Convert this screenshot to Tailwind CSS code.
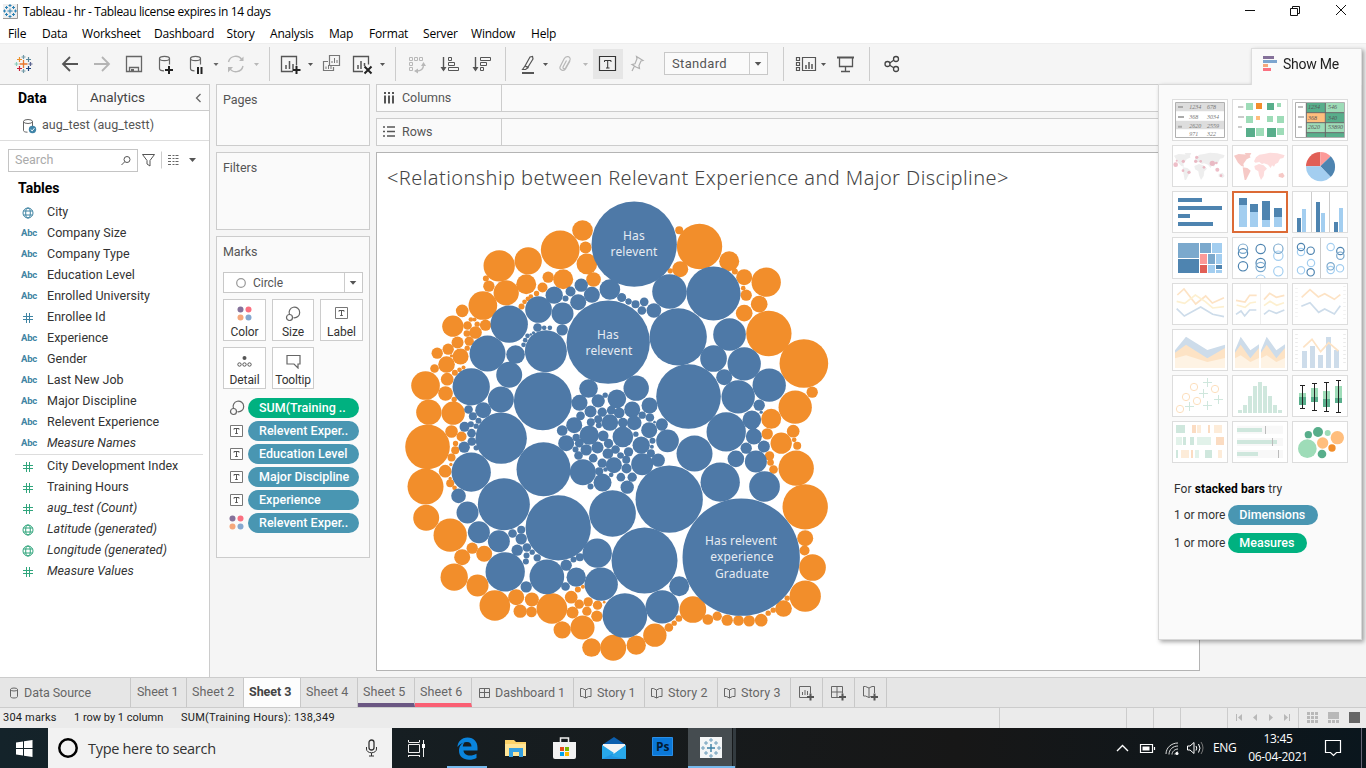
<!DOCTYPE html>
<html lang="en">
<head>
<meta charset="utf-8">
<title>Tableau - hr</title>
<script src="https://cdn.jsdelivr.net/npm/@tailwindcss/browser@4"></script>
</head>
<body class="w-[1366px] h-[768px] overflow-hidden bg-white font-['Roboto','Open_Sans',sans-serif] text-[#333]">
<!-- shared icon symbols -->
<svg class="hidden">
  <symbol id="tee" viewBox="0 0 13 12"><path d="M.5.5h12v11H.5z" fill="#fff" stroke="#777"/><path d="M4 4.700V3.500h5v1.200M6.500 3.500v5M5.200 8.500h2.600" fill="none" stroke="#555"/></symbol>
  <symbol id="globe" viewBox="0 0 12 12"><g fill="none" stroke="currentColor"><circle cx="6" cy="6" r="5"/><ellipse cx="6" cy="6" rx="2.300" ry="5"/><path d="M1.500 4h9M1.500 8h9"/></g></symbol>
  <symbol id="hash" viewBox="0 0 12 12"><path d="M1 4.500h10M1 7.500h10M4.500 1v10M7.500 1v10" fill="none" stroke="currentColor"/></symbol>
  <symbol id="sizes" viewBox="0 0 16 16"><g fill="none" stroke="#666" stroke-width="1.200"><path d="M4.500 8.500A5.300 5.300 0 1 1 8.500 11.700"/><circle cx="4.500" cy="11.500" r="3"/></g></symbol>
  <symbol id="dots" viewBox="0 0 15 15"><circle cx="3.500" cy="3.500" r="3" fill="#85719a"/><circle cx="11.500" cy="3.500" r="3" fill="#fa7080"/><circle cx="3.500" cy="11.500" r="3" fill="#f5a77c"/><circle cx="11.500" cy="11.500" r="3" fill="#85a8d0"/></symbol>
  <symbol id="book" viewBox="0 0 12 12"><path d="M.5 1.500h2l3 1.500v8l-3-1.500h-2zM5.500 3l3-1.500h2.500v8H8.500l-3 1.500" fill="none" stroke="#666"/></symbol>
</svg>

<div class="flex flex-col w-full h-full">
  <!-- window title -->
  <header class="flex items-center h-[23px] shrink-0 pl-[3px] font-['Open_Sans'] text-[12px] text-black">
    <svg width="15" height="15" viewBox="0 0 15 15"><path d="M0 0h14.500v14.500H0z" fill="#eee"/><path d="M14.500 0v14.500H0" fill="none" stroke="#999"/><path d="M7 4.500v5M4.500 7h5M7 0v3M5.500 1.500h3M7 11v3M5.500 12.500h3M0 7h3M1.500 5.500v3M11 7h3M12.500 5.500v3M3.500 2v3M2 3.500h3M10.500 2v3M9 3.500h3M3.500 9v3M2 10.500h3M10.500 9v3M9 10.500h3" stroke="#2c82b5" fill="none"/></svg>
    <span class="ml-[5px] tracking-[-0.37px] whitespace-nowrap">Tableau - hr - Tableau license expires in 14 days</span>
    <svg class="ml-auto" width="126" height="23" viewBox="1240 0 126 23" fill="none" stroke="#111"><path d="M1245 10.500h10M1290.500 8.500h7v7h-7zM1292.500 8.500v-2h7v7h-2M1336 5l10 10M1346 5l-10 10"/></svg>
  </header>
  <nav class="flex items-center h-[20px] shrink-0 pl-2 pt-px font-['Open_Sans'] text-[12px] tracking-[-0.2px] text-black whitespace-nowrap">
    <span class="w-[34px]">File</span><span class="w-[40px]">Data</span><span class="w-[72px]">Worksheet</span><span class="w-[72.500px]">Dashboard</span><span class="w-[43.500px]">Story</span><span class="w-[59px]">Analysis</span><span class="w-[40px]">Map</span><span class="w-[54px]">Format</span><span class="w-[48px]">Server</span><span class="w-[60px]">Window</span><span>Help</span>
  </nav>

  <!-- toolbar: each icon cell uses window coordinates -->
  <div class="flex h-[41px] shrink-0 bg-[#f5f5f5] border-t border-[#eee]">
    <svg width="48" height="40" viewBox="0 44 48 40" fill="none"><path d="M47.500 47v34" stroke="#ccc"/><g stroke-width="1.200"><path d="M23.500 60v8M19.500 64h8" stroke="#e8762c" stroke-width="1.300"/><path d="M19.500 57v5M17 59.500h5" stroke="#eb912c"/><path d="M28.500 57v5M26 59.500h5" stroke="#59879b"/><path d="M19.500 66v5M17 68.500h5" stroke="#c72037"/><path d="M28.500 66v5M26 68.500h5" stroke="#1f447e"/><path d="M23.500 55v4M21.500 57h4" stroke="#7199a6"/><path d="M23.500 69v4M21.500 71h4" stroke="#7099a6"/><path d="M16.500 62v4M14.500 64h4" stroke="#8cb"/><path d="M30.500 62v4M28.500 64h4" stroke="#5b6591"/></g></svg>
    <svg width="38" height="40" viewBox="48 44 38 40" fill="none" stroke="#555" stroke-width="1.800"><path d="M78 64H63M70 57l-7 7 7 7"/></svg>
    <svg width="32" height="40" viewBox="86 44 32 40" fill="none" stroke="#b4b4b4" stroke-width="1.800"><path d="M94 64h15M102 57l7 7-7 7"/></svg>
    <svg width="32" height="40" viewBox="118 44 32 40" fill="none" stroke="#666"><path d="M126.500 56.500h15v15h-15zM129.500 71.500v-4h9v4" stroke-width="1.300"/><path d="M131 69h3v3h-3z" fill="#666" stroke="none"/></svg>
    <svg width="32" height="40" viewBox="150 44 32 40" fill="none" stroke="#666"><g stroke-width="1.200"><ellipse cx="164.500" cy="58.500" rx="5" ry="2.200"/><path d="M159.500 58.500v10c0 1.500 2 2.300 4.500 2.300M169.500 58.500v6"/></g><path d="M169 66v8M165 70h8" stroke="#222" stroke-width="2"/></svg>
    <svg width="40" height="40" viewBox="182 44 40 40" fill="none" stroke="#666"><g stroke-width="1.200"><ellipse cx="195.500" cy="58.500" rx="5" ry="2.200"/><path d="M190.500 58.500v10c0 1.500 2 2.300 4 2.300M200.500 58.500v6"/></g><path d="M198 67v7M201.500 67v7" stroke="#222" stroke-width="2"/><path d="M213.500 63h5l-2.500 3z" fill="#666" stroke="none"/></svg>
    <svg width="48" height="40" viewBox="222 44 48 40" fill="none" stroke="#b8b8b8"><path d="M228.500 62a7.300 7.300 0 0 1 13.500-2M243 66a7.300 7.300 0 0 1-13.500 2" stroke-width="1.400"/><path d="M239 61h4.500v-4.500zM228 72.500V67h5zM254 63h5l-2.500 3z" fill="#b8b8b8" stroke="none"/><path d="M269.500 47v34" stroke="#ccc"/></svg>
    <svg width="46" height="40" viewBox="270 44 46 40" fill="none" stroke="#555"><path d="M293 71.500h-11.500v-15h15v9" stroke-width="1.300"/><path d="M286 69v-4M289.500 69v-8M293 69v-5" stroke-width="1.500"/><path d="M296.500 66v8M292.500 70h8" stroke="#222" stroke-width="2"/><path d="M308 63h5l-2.500 3z" fill="#555" stroke="none"/></svg>
    <svg width="31" height="40" viewBox="316 44 31 40" fill="none" stroke="#777"><path d="M329.500 55.500h10v10h-10zM328 61.500h-4.500v9h10V67" stroke-width="1.200"/><path d="M332 63v-2M334.500 63v-5M337 63v-3M326 69v-2.500M328.500 69v-4M331 69v-3"/></svg>
    <svg width="49" height="40" viewBox="347 44 49 40" fill="none" stroke="#555"><path d="M363 71.500h-9.500v-15h15v8" stroke-width="1.300"/><path d="M358 69v-4M361 69v-8M364.500 66v-3" stroke-width="1.500"/><path d="M364.500 66.500l7 7M371.500 66.500l-7 7" stroke="#222" stroke-width="2"/><path d="M380 63h5l-2.500 3z" fill="#555" stroke="none"/><path d="M395.500 47v34" stroke="#ccc"/></svg>
    <svg width="37" height="40" viewBox="396 44 37 40" fill="none" stroke="#b8b8b8"><path d="M409.500 57.500h3v3h-3zM414.500 57.500h3v3h-3zM419.500 57.500h3v3h-3zM409.500 62.500h3v3h-3zM409.500 67.500h3v3h-3z"/><path d="M423.500 65c0 4-3 6-7 6" stroke-width="1.300"/><path d="M421 66l2.500-4 2.500 4zM418 68.500v5l-4-2.500z" fill="#b8b8b8" stroke="none"/></svg>
    <svg width="33" height="40" viewBox="433 44 33 40" fill="none" stroke="#555"><path d="M443.500 57v13" stroke-width="1.400"/><path d="M440.500 67h6l-3 4.500z" fill="#555" stroke="none"/><path d="M448.500 57.500h3v3h-3zM448.500 62.500h6v3h-6zM448.500 67.500h10v3h-10z"/></svg>
    <svg width="40" height="40" viewBox="466 44 40 40" fill="none" stroke="#555"><path d="M475.500 57v13" stroke-width="1.400"/><path d="M472.500 67h6l-3 4.500z" fill="#555" stroke="none"/><path d="M480.500 57.500h10v3h-10zM480.500 62.500h6v3h-6zM480.500 67.500h3v3h-3z"/><path d="M505.500 47v34" stroke="#ccc"/></svg>
    <svg width="46" height="40" viewBox="506 44 46 40" fill="none" stroke="#555"><path d="M525 66l5-9 2.500-.5.500 2.500-5 8zM522.500 69.500l2.500-3.500 3 1.700-2.500 1.800z" stroke-width="1.200"/><path d="M522 73h12" stroke-width="2"/><path d="M543 63h5l-2.500 3z" fill="#555" stroke="none"/></svg>
    <svg width="41" height="40" viewBox="552 44 41 40" fill="none" stroke="#b8b8b8"><path d="M570 61l-4.500 8c-1.500 2.500-6.500 1-5.500-2l4-8c2-4 7-2.500 6 1l-4.500 8c-1 1.500-3 .5-2.500-1l3.500-6.500" stroke-width="1.200"/><path d="M583 63h5l-2.500 3z" fill="#b8b8b8" stroke="none"/></svg>
    <svg width="31" height="40" viewBox="593 44 31 40" fill="none" stroke="#333"><path d="M593 49h30v30h-30z" fill="#e6e6e6" stroke="none"/><path d="M599.500 56.500h16v14h-16z" fill="#efefef" stroke-width="1.200"/><path d="M604.500 62v-1.500h6.500V62M607.700 60.500v7.500M606 68h3.500"/></svg>
    <svg width="40" height="40" viewBox="624 44 40 40" fill="none" stroke="#b0b0b0"><path d="M636.500 56.500l6.500 4-2 .5-2 4.500.5 3-3.500-1.500-4-2.500 3-.7 2-5zM634.500 66l-2.500 5" stroke-width="1.200"/></svg>
    <div class="flex w-[104px] h-[23px] mt-2 bg-[#fafafa] border border-[#c8c8c8] items-center pl-[7px] text-[13px] tracking-[0.35px] text-[#555]">Standard
      <svg class="ml-auto border-l border-[#ccc]" width="18" height="21" viewBox="0 0 18 21"><path d="M5 9h7l-3.500 4z" fill="#555"/></svg>
    </div>
    <svg width="61" height="40" viewBox="768 44 61 40" fill="none" stroke="#555"><path d="M783.500 47v34" stroke="#ccc"/><path d="M796.500 57.500h3v3h-3zM796.500 62.500h3v3h-3zM796.500 67.500h3v3h-3zM802.500 57.500h13v13h-13z" stroke-width="1.200"/><path d="M806 69v-4M809 69v-7M812 69v-5" stroke-width="1.500"/><path d="M821 63h5l-2.500 3z" fill="#555" stroke="none"/></svg>
    <svg width="41" height="40" viewBox="829 44 41 40" fill="none" stroke="#555"><path d="M837 57.500h17" stroke-width="2"/><path d="M839.500 58v8.500h13V58M845.500 67v4M841 71.500h9" stroke-width="1.300"/><path d="M869.500 47v34" stroke="#ccc"/></svg>
    <svg width="40" height="40" viewBox="870 44 40 40" fill="none" stroke="#444" stroke-width="1.300"><circle cx="887.500" cy="64" r="2.500"/><circle cx="896" cy="59" r="2.500"/><circle cx="896" cy="69" r="2.500"/><path d="M889.700 63l4-2.700M889.700 65.300l4 2.400"/></svg>
  </div>

  <!-- workspace -->
  <main class="relative flex h-[593px] shrink-0 bg-[#f5f5f5] whitespace-nowrap">
    <aside class="w-[210px] h-full bg-white border-r border-[#ccc] shrink-0 flex flex-col">
      <div class="flex h-[27px] shrink-0">
        <div class="w-[77px] border-t border-[#ccc] pl-[18px] leading-[26px] text-[14px] font-bold text-black">Data</div>
        <div class="flex items-center flex-1 border-t border-l border-b border-[#ccc] bg-[#fafafa] pl-[12px] text-[13.500px] text-[#444]">Analytics
          <svg class="ml-auto mr-[6px]" width="9" height="12" viewBox="0 0 9 12"><path d="M6.500 2l-4 4 4 4" fill="none" stroke="#666" stroke-width="1.300"/></svg></div>
      </div>
      <div class="flex items-center h-[30px] shrink-0 border-b border-[#ddd] pl-[22px] text-[12.500px] text-[#555] tracking-[0.05px]">
        <svg width="15" height="16" viewBox="0 0 15 16"><g fill="none" stroke="#666"><ellipse cx="6" cy="3.500" rx="4.500" ry="2"/><path d="M1.500 3.500v9c0 1 1.500 1.700 4 1.700M10.500 3.500v5"/></g><circle cx="10.500" cy="11.500" r="3.700" fill="#3f84a8"/><path d="M8.700 11.500l1.500 1.400 2.200-2.700" fill="none" stroke="#fff"/></svg>
        <span class="ml-[5px]">aug_test (aug_testt)</span>
      </div>
      <div class="flex items-center h-[23px] shrink-0 mt-2 ml-2">
        <div class="flex items-center w-[130px] h-[23px] border border-[#c4c4c4] pl-[6px] pr-[5px] text-[12.500px] text-[#aaa]">Search
          <svg class="ml-auto" width="12" height="12" viewBox="0 0 12 12" fill="none" stroke="#555"><circle cx="7" cy="4.500" r="3"/><path d="M4.700 6.800L1.500 10"/></svg></div>
        <svg width="66" height="23" viewBox="138 149 66 23"><path d="M142.500 154.500h12l-4.500 6v5.500l-3-2v-3.500z" fill="none" stroke="#555"/><path d="M161.500 151.500v17" stroke="#ccc"/><path d="M168 155.500h12M168 158.500h12M168 161.500h12M168 164.500h12" stroke="#666" stroke-dasharray="3 1.500 2 1"/><path d="M189 158h7l-3.500 4z" fill="#555"/></svg>
      </div>
      <h2 class="mt-[7px] pl-[18px] h-[20px] leading-[19px] text-[14px] font-bold text-black shrink-0">Tables</h2>
      <ul id="dims" class="pl-[21px] text-[12.500px] tracking-[0.03px] mt-[3px]"></ul>
      <div class="ml-[15px] mr-[6px] mb-px h-px bg-[#ddd] shrink-0"></div>
      <ul id="meas" class="pl-[21px] text-[12.500px] tracking-[0.03px]"></ul>
    </aside>

    <section class="flex flex-col gap-[6px] ml-[6px] w-[154px] shrink-0 text-[12.500px] text-[#555] tracking-[-0.05px]">
      <div class="h-[62px] border border-[#ccc] bg-[#fafafa] pl-[6px] pt-[6px]">Pages</div>
      <div class="h-[78px] border border-[#ccc] bg-[#fafafa] pl-[6px] pt-[6px]">Filters</div>
      <div class="h-[322px] border border-[#ccc] bg-[#fafafa] pl-[6px] pt-[6px]">
        <div class="h-[29px]">Marks</div>
        <div class="flex items-center w-[140px] h-[21px] border border-[#c8c8c8] bg-white pl-[11px]">
          <svg width="12" height="12" viewBox="0 0 12 12"><circle cx="6" cy="6" r="4.300" fill="none" stroke="#999" stroke-width="1.200"/></svg>
          <span class="ml-[6px] pt-px text-[12px]">Circle</span>
          <svg class="ml-auto border-l border-[#ccc]" width="18" height="19" viewBox="0 0 18 19"><path d="M5 8h7l-3.500 4z" fill="#555"/></svg>
        </div>
        <div class="grid grid-cols-[43px_42px_43px] gap-x-[6px] gap-y-[6px] mt-[6px] text-[12px] tracking-[-0.05px] text-[#333]">
          <div class="h-[42px] border border-[#ccc] bg-white flex flex-col items-center pt-[6px]"><svg width="15" height="15"><use href="#dots"/></svg><span class="leading-[13px] mt-[5px]">Color</span></div>
          <div class="h-[42px] border border-[#ccc] bg-white flex flex-col items-center pt-[6px]"><svg width="16" height="15" viewBox="0 0 16 15"><use href="#sizes" width="16" height="16"/></svg><span class="leading-[13px] mt-[5px]">Size</span></div>
          <div class="h-[42px] border border-[#ccc] bg-white flex flex-col items-center pt-[7px]"><svg width="13" height="12"><use href="#tee"/></svg><span class="leading-[13px] mt-[7px]">Label</span></div>
          <div class="h-[42px] border border-[#ccc] bg-white flex flex-col items-center pt-[6px]"><svg width="15" height="15" viewBox="0 0 15 15"><circle cx="7.500" cy="4" r="2" fill="#555"/><g fill="none" stroke="#555"><circle cx="2.500" cy="10.500" r="1.700"/><circle cx="7.500" cy="10.500" r="1.700"/><circle cx="12.500" cy="10.500" r="1.700"/></g></svg><span class="leading-[13px] mt-[5px]">Detail</span></div>
          <div class="h-[42px] border border-[#ccc] bg-white flex flex-col items-center pt-[6px]"><svg width="15" height="15" viewBox="0 0 15 15"><path d="M1 1.500h13v8.500h-2v4l-4-4H1z" fill="none" stroke="#666" stroke-width="1.200"/></svg><span class="leading-[13px] mt-[5px] tracking-[-0.2px]">Tooltip</span></div>
        </div>
        <ul id="pills" class="mt-[9px] pl-[6px] flex flex-col gap-[4px] text-[12.500px] font-medium text-white tracking-[0.02px]"></ul>
      </div>
    </section>

    <section class="flex flex-col ml-[6px] w-[824px] shrink-0 text-[12.500px] text-[#555] tracking-[-0.05px]">
      <div class="flex h-[28px] border border-[#ccc] bg-[#fafafa]">
        <div class="flex items-center w-[125px] border-r border-[#ccc] pl-[6px]"><svg width="14" height="14" viewBox="0 0 14 14"><path d="M2 1v2M2 4.500v8M6 1v2M6 4.500v8M10 1v2M10 4.500v8" stroke="#555" stroke-width="2"/></svg><span class="ml-[5px]">Columns</span></div>
      </div>
      <div class="flex h-[28px] mt-[6px] border border-[#ccc] bg-[#fafafa]">
        <div class="flex items-center w-[125px] border-r border-[#ccc] pl-[6px]"><svg width="14" height="14" viewBox="0 0 14 14"><path d="M0 2h2M4 2h8M0 6.500h2M4 6.500h8M0 11h2M4 11h8" stroke="#555" stroke-width="1.700"/></svg><span class="ml-[5px]">Rows</span></div>
      </div>
      <div class="mt-[6px] h-[519px] bg-white border border-[#b4b4b4]">
        <h1 class="h-[50px] pl-[10px] leading-[49px] font-['Noto_Sans','Open_Sans'] font-light text-[20px] tracking-[0.42px] text-[#444]">&lt;Relationship between Relevant Experience and Major Discipline&gt;</h1>
        <svg id="bubbles" width="822" height="467" viewBox="377 203 822 467" class="font-['Noto_Sans','Open_Sans'] text-[12px] tracking-[0.15px] overflow-visible"></svg>
      </div>
    </section>

    <!-- Show Me panel floats over the view -->
    <div class="absolute left-[1158px] top-[-36px] w-[204px] h-[592px] drop-shadow-[2px_2px_2px_rgba(0,0,0,0.35)] flex flex-col">
      <div class="relative z-10 flex items-center self-end w-[111px] h-[37px] bg-[#fafafa] border border-b-0 border-[#ddd] pl-[11px] pb-[6px] text-[14px] text-[#222] tracking-[-0.25px]">
        <svg width="15" height="16" viewBox="0 0 15 16"><path d="M0 0h11v3H0z" fill="#85719a"/><path d="M0 4h14v3H0z" fill="#7da5cf"/><path d="M0 8h5v3H0z" fill="#f5a77c"/><path d="M0 12h8v3H0z" fill="#fb7181"/></svg>
        <span class="ml-[5px]">Show Me</span>
      </div>
      <div class="-mt-px flex-1 bg-[#fafafa] border border-[#d8d8d8] pl-[13px] pt-[14px]">
        <div class="grid grid-cols-[56px_56px_56px] gap-x-[4px] gap-y-[4px]" id="thumbs">
          <svg width="56" height="42" viewBox="66 177 168 126"><path d="M66 177h168v126H66z" fill="#fff"/><path d="M78 188h144v26H78zM78 242h144v26H78z" fill="#ddd"/><path d="M76.500 187.500h147v105h-147z" fill="none" stroke="#b0b0b0" stroke-width="3"/><path d="M84 201h15M84 231h18M84 260h12" stroke="#aaa" stroke-width="6"/><g font-family="Liberation Serif" font-style="italic" font-size="18" fill="#777"><text x="118" y="208">1234</text><text x="171" y="208">678</text><text x="118" y="236">368</text><text x="171" y="236">3034</text><text x="118" y="263">2620</text><text x="171" y="263">2559</text><text x="118" y="287">971</text><text x="171" y="287">322</text></g></svg>
          <svg width="56" height="42" viewBox="246 177 168 126"><path d="M246 177h168v126H246z" fill="#fff"/><path d="M264 201h16M264 231h18M264 261h12" stroke="#bbb" stroke-width="5"/><path d="M288 189h21v21h-21zM381 189h12v12h-12zM288 228h21v21h-21zM351 228h18v18h-18zM381 228h21v21h-21zM318 264h24v24h-24zM381 264h21v21h-21z" fill="#9edcb8"/><path d="M351 189h21v21h-21zM288 264h27v27h-27zM351 264h27v27h-27z" fill="#58ae8b"/><path d="M318 189h18v18h-18z" fill="#f28e2b"/><path d="M318 228h12v12h-12z" fill="#ffbe7d"/></svg>
          <svg width="56" height="42" viewBox="426 177 168 126"><path d="M426 177h168v126H426z" fill="#fff"/><path d="M470 188h56v30h-56zM527 218h56v30h-56zM470 278h113v14H470z" fill="#58ae8b"/><path d="M527 188h56v30h-56zM470 248h113v30H470z" fill="#9edcb8"/><path d="M470 218h56v30h-56z" fill="#ffbe7d"/><path d="M526 187v105M469 187v105M469 218h115M469 248h115M469 278h115" stroke="#666" stroke-width="3"/><path d="M436.500 187.500h147v105h-147z" fill="none" stroke="#b0b0b0" stroke-width="3"/><path d="M444 201h15M444 231h18M444 261h12" stroke="#aaa" stroke-width="5"/><g font-family="Liberation Serif" font-style="italic" font-size="18" fill="#555"><text x="474" y="208">1234</text><text x="534" y="208">546</text><text x="474" y="239">368</text><text x="534" y="239">340</text><text x="474" y="268">2620</text><text x="534" y="268">53890</text></g></svg>
          <svg width="56" height="42" viewBox="66 315 168 126"><path d="M66 315h168v126H66z" fill="#fff"/><path fill="#eee" d="M72 347l14-5 30 2 6 8-12 6-10 14 2 8-8-2-10-10-8-14zM104 339l20 0-4 8-10 0zM98 382l14 2 10 8-6 12-8 16-4 0-4-22zM133 378l14-6 14 4 10 10-8 8-2 14-8 12-6-14-2-12-10-6zM132 364l6-12 10-8 14-2 18-4 22 2 22 6-4 8-10 2-6 12-8 4-4 8-6-4-4 8-8-10-12-4-6 2-8-6-12 2zM206 402l12-4 6 10-6 6-12-4z"/><g fill="#e8a3b2" opacity=".7"><circle cx="77" cy="374" r="7"/><circle cx="80" cy="362" r="3"/><circle cx="100" cy="364" r="5"/><circle cx="99" cy="392" r="4"/><circle cx="117" cy="397" r="5"/><circle cx="137" cy="364" r="5"/><circle cx="140" cy="352" r="5"/><circle cx="152" cy="364" r="4"/><circle cx="162" cy="382" r="4"/><circle cx="187" cy="370" r="8"/><circle cx="199" cy="369" r="4"/><circle cx="202" cy="389" r="6"/><circle cx="213" cy="407" r="4"/></g></svg>
          <svg width="56" height="42" viewBox="246 315 168 126"><path d="M246 315h168v126H246z" fill="#fff"/><path transform="translate(180)" fill="#fddcdc" d="M133 378l14-6 14 4 10 10-8 8-2 14-8 12-6-14-2-12-10-6zM132 364l6-12 10-8 14-2 18-4 22 2 22 6-4 8-10 2-6 12-8 4-4 8-6-4-4 8-8-10-12-4-6 2-8-6-12 2z"/><path transform="translate(180)" fill="#f6c9c6" d="M72 347l14-5 30 2 6 8-12 6-10 14 2 8-8-2-10-10-8-14zM104 339l20 0-4 8-10 0zM98 382l14 2 10 8-6 12-8 16-4 0-4-22zM206 402l12-4 6 10-6 6-12-4z"/></svg>
          <svg width="56" height="42" viewBox="426 315 168 126"><path d="M426 315h168v126H426z" fill="#fff"/><path d="M511 379V336a43 43 0 0 0-43 43z" fill="#e15f56"/><path d="M511 379V336a43 43 0 0 1 31 13z" fill="#fc9a98"/><path d="M511 379l31-30a43 43 0 0 1 0 62z" fill="#4e84b0"/><path d="M511 379H468a43.500 43.500 0 0 0 74 32z" fill="#a3cef0"/></svg>
          <svg width="56" height="42" viewBox="66 453 168 126"><path d="M66 453h168v126H66z" fill="#fff"/><path d="M84 474h72v12H84zM84 498h132v12H84zM84 522h36v12H84zM84 546h105v12H84z" fill="#4e84b0"/></svg>
          <svg width="56" height="42" viewBox="246 453 168 126"><path d="M246 453h168v126H246z" fill="#fff"/><path d="M267 495h24v66h-24zM300 516h24v45h-24zM336 540h24v21h-24zM372 531h24v30h-24z" fill="#a3cef0"/><path d="M267 474h24v21h-24zM300 492h24v24h-24zM336 483h24v57h-24zM372 504h24v27h-24z" fill="#4e84b0"/></svg>
          <svg width="56" height="42" viewBox="426 453 168 126"><path d="M426 453h168v126H426z" fill="#fff"/><path d="M484.500 456v120M538.500 456v120" stroke="#ccc" stroke-width="3"/><path d="M441 534h12v42h-12zM498 486h12v90h-12zM552 546h12v30h-12z" fill="#4e84b0"/><path d="M456 507h12v69h-12zM513 519h12v57h-12zM567 504h12v72h-12z" fill="#a3cef0"/></svg>
          <svg width="56" height="42" viewBox="66 591 168 126"><path d="M66 591h168v126H66z" fill="#fff"/><path d="M84 609h63v45H84zM150 609h33v30h-33zM174 642h21v30h-21z" fill="#7ba9cd"/><path d="M84 657h63v42H84zM198 675h18v12h-18z" fill="#4e84b0"/><path d="M186 609h30v30h-30zM198 642h18v30h-18zM174 675h21v24h-21zM198 690h18v9h-18z" fill="#a3cef0"/><path d="M150 642h21v30h-21z" fill="#fc9a98"/><path d="M150 675h21v24h-21z" fill="#e15f56"/></svg>
          <svg width="56" height="42" viewBox="246 591 168 126"><path d="M246 591h168v126H246z" fill="#fff"/><g fill="none" stroke-width="3.500"><g stroke="#a3cef0"><circle cx="385" cy="647" r="14"/><circle cx="385" cy="694" r="14"/><circle cx="332" cy="719" r="14"/></g><g stroke="#4e84b0"><circle cx="279" cy="640" r="14"/><circle cx="279" cy="679" r="14"/><circle cx="332" cy="627" r="14"/><circle cx="332" cy="669" r="14"/></g><g stroke="#7ba9cd"><circle cx="279" cy="626" r="14"/><circle cx="332" cy="681" r="14"/><circle cx="385" cy="626" r="14"/></g></g></svg>
          <svg width="56" height="42" viewBox="426 591 168 126"><path d="M426 591h168v126H426z" fill="#fff"/><path d="M511.500 594v120" stroke="#ccc" stroke-width="3"/><g fill="none" stroke-width="3.500"><g stroke="#a3cef0"><circle cx="453" cy="636" r="11"/><circle cx="483" cy="669" r="11"/><circle cx="453" cy="691" r="11"/><circle cx="542" cy="621" r="11"/><circle cx="570" cy="685" r="11"/><circle cx="542" cy="690" r="11"/></g><g stroke="#4e84b0"><circle cx="453" cy="621" r="11"/><circle cx="482" cy="632" r="11"/><circle cx="482" cy="697" r="11"/><circle cx="571" cy="633" r="11"/></g><g stroke="#7ba9cd"><circle cx="571" cy="647" r="11"/><circle cx="542" cy="679" r="11"/></g></g></svg>
          <svg width="56" height="42" viewBox="66 729 168 126"><path d="M66 729h168v126H66z" fill="#fff"/><g fill="none" stroke-width="5"><path d="M82 765l20-18 35 45 30-24 20 21 35-16" stroke="#fde3c5"/><path d="M80 784l24 6 32-25 30 20 22 19 34-4" stroke="#fdf0d0"/><path d="M80 806l23 22 49-27 36 22 34 7" stroke="#cddcea"/></g></svg>
          <svg width="56" height="42" viewBox="246 729 168 126"><path d="M246 729h168v126H246z" fill="#fff"/><path d="M331.500 732v120" stroke="#eee" stroke-width="3"/><g fill="none" stroke-width="5"><path d="M258 781l27 5 14-20h21M342 779l17-19 20 12 24-6" stroke="#fde3c5"/><path d="M260 795l25 7 15-13 18-3M342 797l18-13 20 12 22-8" stroke="#fdf0d0"/><path d="M258 823l15-10 11 15 15-18 20 0M342 823l15-12 22 9 24-10" stroke="#cddcea"/></g></svg>
          <svg width="56" height="42" viewBox="426 729 168 126"><path d="M426 729h168v126H426z" fill="#fff"/><path d="M439.500 744v96M583.500 738v102" stroke="#eee" stroke-width="8" stroke-dasharray="2 10"/><g fill="none" stroke-width="5"><path d="M455 772l25-23 25 22 19-10 29 17 18-14" stroke="#fde3c5"/><path d="M454 799l26-11 26 29 18-10 29 15 18-25" stroke="#cddcea"/></g></svg>
          <svg width="56" height="42" viewBox="66 27 168 126"><path d="M66 27h168v126H66z" fill="#fff"/><path d="M75 91l33-41 64 40 53-16v70H75z" fill="#cddcea"/><path d="M75 98l33-24 64 41 53-31v60H75z" fill="#fde3c5"/><path d="M75 115l33-9 64 20 53-12v30H75z" fill="#fef3e4"/></svg>
          <svg width="56" height="42" viewBox="246 27 168 126"><path d="M246 27h168v126H246z" fill="#fff"/><g id="ar"><path d="M255 91l17-41 29 41 26-18v71h-72z" fill="#cddcea"/><path d="M255 98l17-24 29 41 26-31v60h-72z" fill="#fde3c5"/><path d="M255 115l17-9 29 20 26-12v30h-72z" fill="#fef3e4"/></g><use href="#ar" x="78"/></svg>
          <svg width="56" height="42" viewBox="426 27 168 126"><path d="M426 27h168v126H426z" fill="#fff"/><path d="M439.500 42v96M583.500 42v96" stroke="#e4e4e4" stroke-width="8" stroke-dasharray="2 10"/><path d="M456 93h15v51h-15zM480 78h15v66h-15zM504 105h15v39h-15zM528 51h15v93h-15zM552 90h15v54h-15z" fill="#cddcea"/><path d="M460 82l26-24 26 37 24-27 29 25" fill="none" stroke="#fde3c5" stroke-width="5"/></svg>
          <svg width="56" height="42" viewBox="66 165 168 126"><path d="M66 165h168v126H66z" fill="#fff"/><g fill="none" stroke-width="3"><g stroke="#fddfbd"><circle cx="132" cy="201" r="11"/><circle cx="108" cy="231" r="11"/><circle cx="141" cy="243" r="11"/><circle cx="195" cy="207" r="11"/><circle cx="90" cy="267" r="11"/></g><path d="M172.500 174v27M159 187.500h27M160.500 207v27M147 220.500h27M205.500 225v27M192 238.500h27M172.500 243v27M159 256.500h27M118.500 246v27M105 259.500h27" stroke="#cfe7dd"/></g></svg>
          <svg width="56" height="42" viewBox="246 165 168 126"><path d="M246 165h168v126H246z" fill="#fff"/><path d="M264 270h12v9h-12zM279 255h12v24h-12zM294 228h12v51h-12zM309 198h12v81h-12zM324 186h12v93h-12zM339 198h12v81h-12zM354 228h12v51h-12zM369 255h12v24h-12zM384 270h12v9h-12z" fill="#cfe7dd"/></svg>
          <svg width="56" height="42" viewBox="426 165 168 126"><path d="M426 165h168v126H426z" fill="#fff"/><path d="M447 219h21v12h-21zM483 204h21v27h-21zM519 213h21v24h-21zM555 198h21v36h-21z" fill="#9edcb8"/><path d="M447 231h21v24h-21zM483 231h21v15h-21zM519 237h21v24h-21zM555 234h21v15h-21z" fill="#58ae8b"/><path d="M457.500 196v70M450 196.500h15M450 265.500h15M493.500 190v82M486 190.500h15M486 271.500h15M529.500 187v88M522 187.500h15M522 274.500h15M565.500 181v96M558 181.500h15M558 277.500h15" stroke="#222" stroke-width="3"/></svg>
          <svg width="56" height="42" viewBox="66 303 168 126"><path d="M66 303h168v126H66z" fill="#fff"/><path d="M78 315h27v24H78zM99 351h9v24h-9zM120 351h12v24h-12zM78 390h6v24h-6zM165 390h21v24h-21z" fill="#cfe7dd"/><path d="M78 351h18v24H78zM141 351h42v24h-42zM135 390h12v24h-12z" fill="#e2f2ea"/><path d="M126 315h12v24h-12zM174 315h6v24h-6zM198 351h24v24h-24zM123 390h6v24h-6z" fill="#fbdcc2"/><path d="M141 315h12v24h-12zM192 315h24v24h-24zM93 390h24v24H93zM204 390h12v24h-12z" fill="#fdecd9"/></svg>
          <svg width="56" height="42" viewBox="246 303 168 126"><path d="M246 303h168v126H246z" fill="#fff"/><path d="M261 317h138v24H261zM261 354h138v24H261zM261 390h138v24H261z" fill="#f8f8f8"/><path d="M261 324h75v12h-75zM261 360h120v12H261zM261 396h63v12h-63z" fill="#cfe7dd"/><path d="M346.500 318v24M367.500 354v24M385.500 390v24" stroke="#bbb" stroke-width="3"/></svg>
          <svg width="56" height="42" viewBox="426 303 168 126"><path d="M426 303h168v126H426z" fill="#fff"/><g fill="#58ae8b"><circle cx="475" cy="344" r="11"/><circle cx="504" cy="336" r="15"/><circle cx="516" cy="402" r="13"/></g><g fill="#9edcb8"><circle cx="472" cy="386" r="28"/><circle cx="533" cy="339" r="9"/></g><g fill="#ffbe7d"><circle cx="562" cy="353" r="20"/><circle cx="518" cy="369" r="17"/></g><circle cx="546" cy="384" r="11" fill="#f28e2b"/></svg>
        </div>
        <div class="pl-[2px] pt-[17px] text-[12px] text-[#333]">
          <p class="leading-[18px] tracking-[0.1px]">For <b class="text-black">stacked bars</b> try</p>
          <p class="flex items-center mt-[7px] h-[20px]">1 or more<span class="ml-[3px] w-[90px] h-[20px] rounded-full bg-[#4996b2] text-white font-medium text-[12.500px] leading-[20px] pl-[11px]">Dimensions</span></p>
          <p class="flex items-center mt-[8px] h-[20px]">1 or more<span class="ml-[3px] w-[79px] h-[20px] rounded-full bg-[#00b180] text-white font-medium text-[12.500px] leading-[20px] pl-[11px]">Measures</span></p>
        </div>
      </div>
    </div>
  </main>

  <!-- sheet tabs -->
  <div class="flex h-[31px] shrink-0 bg-[#e6e6e6] border-t border-b border-[#ccc] text-[12.500px] text-[#666] tracking-[-0.05px] whitespace-nowrap leading-[28px]">
    <div class="w-[131px] border-r border-[#c8c8c8] pl-[9px] flex items-center"><svg width="10" height="12" viewBox="0 0 10 12"><g fill="none" stroke="#666"><ellipse cx="5" cy="2.500" rx="3.500" ry="1.500"/><path d="M1.500 2.500v7c0 2 7 2 7 0v-7"/></g></svg><span class="ml-[5px]">Data Source</span></div>
    <div class="w-[56px] border-r border-[#c8c8c8] pl-[6px]">Sheet 1</div>
    <div class="w-[57px] border-r border-[#c8c8c8] pl-[5px] tracking-[0.1px]">Sheet 2</div>
    <div class="w-[57px] border-r border-[#c8c8c8] pl-[5px] bg-[#fdfdfd] font-bold text-[#444]">Sheet 3</div>
    <div class="w-[57px] border-r border-[#c8c8c8] pl-[5px] tracking-[0.1px]">Sheet 4</div>
    <div class="w-[57px] border-r border-[#c8c8c8] pl-[5px] tracking-[0.1px] border-b-4 border-b-[#6b5783]">Sheet 5</div>
    <div class="w-[57px] border-r border-[#c8c8c8] pl-[5px] tracking-[0.1px] border-b-4 border-b-[#fa5f73]">Sheet 6</div>
    <div class="w-[102px] border-r border-[#c8c8c8] pl-[7px] flex items-center"><svg width="12" height="12" viewBox="0 0 12 12"><path d="M.5 1.500h10v9H.5zM5.500 1.500v9M.5 5.500h10" fill="none" stroke="#666"/></svg><span class="ml-[4px]">Dashboard 1</span></div>
    <div class="w-[71px] border-r border-[#c8c8c8] pl-[6px] flex items-center"><svg width="12" height="12"><use href="#book"/></svg><span class="ml-[5px]">Story 1</span></div>
    <div class="w-[73px] border-r border-[#c8c8c8] pl-[6px] flex items-center"><svg width="12" height="12"><use href="#book"/></svg><span class="ml-[5px] tracking-[0.1px]">Story 2</span></div>
    <div class="w-[73px] border-r border-[#c8c8c8] pl-[6px] flex items-center"><svg width="12" height="12"><use href="#book"/></svg><span class="ml-[5px] tracking-[0.1px]">Story 3</span></div>
    <div class="w-[32px] border-r border-[#c8c8c8] flex items-center justify-center"><svg width="16" height="16" viewBox="0 0 16 16" fill="none" stroke="#666"><path d="M8 12.500H.5v-11h11v7M3.500 10V7M6 10V5M8.500 10V6"/><path d="M11.500 8.500v7M8 12h7" stroke-width="2" stroke="#555"/></svg></div>
    <div class="w-[32px] border-r border-[#c8c8c8] flex items-center justify-center"><svg width="16" height="16" viewBox="0 0 16 16" fill="none" stroke="#666"><path d="M8 12.500H.5v-11h11v7M6 1.500v11M.5 7h11"/><path d="M11.500 8.500v7M8 12h7" stroke-width="2" stroke="#555"/></svg></div>
    <div class="w-[32px] border-r border-[#c8c8c8] flex items-center justify-center"><svg width="16" height="16" viewBox="0 0 16 16" fill="none" stroke="#666"><path d="M.5 1.500h2L6 3v9.500L2.500 11h-2zM6 3l3-1.500h2.500V8M6 12.500l2-1"/><path d="M11.500 8.500v7M8 12h7" stroke-width="2" stroke="#555"/></svg></div>
  </div>
  <div class="flex items-center h-[20px] shrink-0 bg-[#ebebeb] pl-[3px] pt-px text-[11px] text-[#222] whitespace-nowrap">
    <span class="w-[71px] tracking-[0.2px]">304 marks</span><span class="w-[107px]">1 row by 1 column</span><span class="tracking-[0.24px]">SUM(Training Hours): 138,349</span>
    <svg class="ml-auto -mt-px" width="370" height="20" viewBox="996 708 370 20"><path d="M999.500 708v20M1126.500 708v20M1153.500 708v20M1180.500 708v20M1227.500 708v20M1298.500 708v20" stroke="#ccc"/><path d="M1236 714h1v7h-1zM1242 714v7l-4-3.500zM1257 714v7l-4-3.500zM1269 714v7l4-3.500zM1284 714v7l4-3.500zM1289 714h1v7h-1z" fill="#b8b8b8"/><path d="M1307 712h3v3h-3zM1311 712h3v3h-3zM1315 712h3v3h-3zM1307 716h3v3h-3zM1311 716h3v3h-3zM1315 716h3v3h-3zM1307 720h3v3h-3zM1311 720h3v3h-3zM1315 720h3v3h-3zM1328 712h11v7h-11zM1328 720h3v3h-3zM1332 720h3v3h-3zM1336 720h3v3h-3z" fill="#b8b8b8"/><path d="M1349 712h11v11h-11z" fill="#666"/></svg>
  </div>

  <!-- Windows taskbar -->
  <footer class="flex h-[40px] shrink-0 bg-linear-to-r from-[#14232a] via-[#171717] via-70% to-[#0a161d] font-['Open_Sans'] text-white whitespace-nowrap">
    <svg width="48" height="40" viewBox="0 728 48 40" fill="#fff"><path d="M16 742.500l7-1v6.500h-7zM24 741.300l8.500-1.300v8H24zM16 749h7v6.500l-7-1zM24 749h8.500v8L24 755.800z"/></svg>
    <div class="flex items-center w-[344px] bg-[#f2f2f2] text-[#333] text-[14.500px] pl-[10px]">
      <svg width="20" height="20" viewBox="0 0 20 20"><circle cx="10" cy="10" r="8.700" fill="none" stroke="#000" stroke-width="2.500"/></svg>
      <span class="ml-[10px] pt-px tracking-[-0.3px]">Type here to search</span>
      <svg class="ml-auto mr-[14px]" width="13" height="18" viewBox="0 0 13 18" fill="none" stroke="#333"><rect x="4" y="1" width="5" height="10" rx="2.500" stroke-width="1.300"/><path d="M1.500 8v2c0 5 10 5 10 0V8M6.500 14v3M4 17h5"/></svg>
    </div>
    <svg width="344" height="40" viewBox="392 728 344 40"><g fill="none" stroke="#eee"><path d="M408.500 744.500h11v8h-11zM408.500 742v-2M419.500 742v-2M408.500 742.500h11M408.500 755.500h11M408.500 755v2M419.500 755v2M423.500 740v17"/></g><path d="M422 744h3v4h-3z" fill="#fff"/>
      <path d="M457.500 747c0-5 4-9.500 10-9.500 6.500 0 10 4.500 10 10v3h-14c.3 3.500 3 5 6.500 5 2.500 0 4.500-.7 6.500-1.800v4.300c-2 1.200-4.500 1.800-7.500 1.800-6 0-10-3.500-10-9 0-4.500 2.500-7.500 6-9-1.500 1.500-2 3-2.200 4.700h8.700c0-2.500-1.500-4.500-4.500-4.500-4 0-7.500 2-9.500 5z" fill="#0a84dd"/>
      <path d="M505 740h9l2 2h10v14h-21z" fill="#fcd36a"/><path d="M505 744h21v12h-21z" fill="#ffe597"/><path d="M509 757v-9h14v9h-4v-5h-6v5z" fill="#35a0e0"/>
      <path d="M560.500 742v-4h8v4" fill="none" stroke="#eee" stroke-width="1.500"/><path d="M553 742h23v15q0 2-2 2h-19q-2 0-2-2z" fill="#f2f2f2"/><path d="M560 747h4v4h-4z" fill="#e74c1c"/><path d="M565 747h4v4h-4z" fill="#7cb900"/><path d="M560 752h4v4h-4z" fill="#00a2ed"/><path d="M565 752h4v4h-4z" fill="#fdb900"/>
      <path d="M602 745l12-8 12 8z" fill="#0d5fae"/><path d="M602 745h24v14h-24z" fill="#2196e3"/><path d="M603 744h22v2l-11 8-11-8z" fill="#f4f4f4"/><path d="M602 745l12 8-12 6zM626 745v14l-15-3z" fill="#28a8ea"/>
      <path d="M652.500 737.500h20v18h-20z" fill="#0b78d8" stroke="#2a8fe8"/><text x="656" y="751" font-size="12" font-weight="bold" fill="#031b33">Ps</text>
      <path d="M688 728h44v40h-44z" fill="#454c50"/><path d="M733 728h3v40h-3z" fill="#333b40"/><path d="M700 737h22v21h-22z" fill="#f4f6f7"/><path d="M711 744v8M707 748h8" stroke="#3b80a5" stroke-width="1.400"/><path d="M711 738v4M709 740h4M711 754v4M709 756h4M703 746v4M701 748h4M719 746v4M717 748h4M706 741v4M704 743h4M716 741v4M714 743h4M706 751v4M704 753h4M716 751v4M714 753h4" stroke="#6d9dba"/>
      <path d="M447 766h40v2h-40zM688 766h47v2h-47z" fill="#76b9ed"/></svg>
    <div class="ml-auto flex items-center text-[12px] tracking-[-0.3px]">
      <svg width="102" height="40" viewBox="1110 728 102 40" fill="none" stroke="#fff"><path d="M1117 751l5.500-5.500 5.500 5.500" stroke-width="1.400"/><path d="M1140.500 744.500h12v8h-12zM1154.500 747v3" stroke-width="1.200"/><path d="M1142.500 746.500h7v4h-7z" fill="#fff" stroke="none"/><path d="M1166 754c0-6 5-11 12-11M1169 754.500c0-5 4-8.500 9-8.500M1172 754.500c0-3 3-5.500 6-5.500M1175 754.500c0-1.500 1.500-2.500 3-2.500" stroke="#ddd"/><circle cx="1177" cy="753.500" r="1.500" fill="#fff" stroke="none"/><path d="M1187.500 746h2.500l4-3.500v11l-4-3.500h-2.500zM1196 746q1.500 2 0 4.500M1198.500 744q3 4 0 8.500"/><path d="M1201 742q4 6 0 12" stroke="#777"/></svg>
      <span class="w-[31px] pl-px">ENG</span>
      <div class="w-[69px] text-center leading-[18px] pl-px"><div>13:45</div><div>06-04-2021</div></div>
      <svg width="54" height="40" viewBox="1312 728 54 40" fill="none" stroke="#fff"><path d="M1325.500 740.500h15v12h-4l-3 3-3-3h-5z" stroke-width="1.200"/><path d="M1361.500 728v40" stroke="#667"/></svg>
    </div>
  </footer>
</div>

<script>
const icon = (k, c) => k === 'abc'
  ? `<span class="w-[14px] text-[9.5px] tracking-[-0.2px] font-bold ${c}">Abc</span>`
  : `<svg class="w-[12px] h-[12px] ml-[1px] mr-[1px] ${c}"><use href="#${k}"/></svg>`;
const field = (k, c, t, i) => `<li class="flex items-center h-[21px]">${icon(k, c)}<span class="ml-[12px] ${i ? 'italic' : ''}">${t}</span></li>`;
const blue = 'text-[#3f84a3]', green = 'text-[#30a57c]';
document.getElementById('dims').innerHTML = [['globe','City'],['abc','Company Size'],['abc','Company Type'],['abc','Education Level'],['abc','Enrolled University'],['hash','Enrollee Id'],['abc','Experience'],['abc','Gender'],['abc','Last New Job'],['abc','Major Discipline'],['abc','Relevent Experience'],['abc','Measure Names',1]].map(d => field(d[0], blue, d[1], d[2])).join('');
document.getElementById('meas').innerHTML = [['hash','City Development Index'],['hash','Training Hours'],['hash','aug_test (Count)',1],['globe','Latitude (generated)',1],['globe','Longitude (generated)',1],['hash','Measure Values',1]].map(d => field(d[0], green, d[1], d[2])).join('');
const pills = [['sizes','SUM(Training ..'],['tee','Relevent Exper..'],['tee','Education Level'],['tee','Major Discipline'],['tee','Experience'],['dots','Relevent Exper..']];
const box = { sizes: 'w-[16px] h-[16px]', tee: 'w-[13px] h-[12px] ml-[1px] mr-[2px]', dots: 'w-[15px] h-[15px] mr-[1px]' };
document.getElementById('pills').innerHTML = pills.map(([k, t], i) => `<li class="flex items-center h-[19px]"><svg class="${box[k]}"><use href="#${k}"/></svg><span class="ml-[3px] w-[111px] h-[20px] leading-[20px] pl-[11px] rounded-full ${i ? 'bg-[#4996b2]' : 'bg-[#00b180]'}">${t}</span></li>`).join('');
document.querySelectorAll('#thumbs > svg').forEach((s, i) => s.setAttribute('class', i === 7 ? 'outline-2 -outline-offset-2 outline-[#dc6a35]' : 'outline-1 -outline-offset-1 outline-[#ddd]'));

// packed bubbles, stored per quadrant in thirds of a pixel: [x, y, r]
const quads = [
  { x: 400, y: 190,
    o: [[297,227,47],[384,212,41],[480,179,58],[547,121,31],[556,172,18],[560,221,31],[580,268,22],[489,267,30],[444,261,17],[427,292,15],[409,310,8],[392,319,7],[383,326,7],[373,335,7],[364,349,9],[378,282,30],[318,308,38],[257,265,9],[266,288,17],[248,346,43],[186,362,19],[158,408,32],[256,405,17],[223,388,6],[212,388,7],[231,402,8],[202,406,13],[200,430,10],[226,427,19],[207,453,14],[172,457,18],[201,474,8],[144,477,17],[111,489,17],[181,499,24],[154,497,5],[139,523,25],[103,535,13],[190,532,6],[178,539,7],[164,548,9],[141,567,19],[76,586,43],[136,610,22],[162,628,8],[86,666,38],[159,669,35]],
    b: [[629,298,31],[664,322,13],[685,334,9],[543,285,20],[511,304,15],[575,314,24],[534,336,24],[496,325,9],[462,315,26],[415,358,40],[487,370,33],[327,402,56],[486,419,17],[449,413,7],[432,413,7],[412,412,13],[400,428,5],[392,433,4],[382,437,7],[375,450,7],[370,464,7],[437,483,63],[624,456,125],[262,490,54],[346,493,28],[327,554,39],[213,590,56],[302,628,39],[428,633,87],[565,595,28],[615,615,8],[594,632,20],[538,638,24],[650,626,28],[606,666,14],[633,660,13],[657,668,16],[571,664,18],[541,677,13],[572,696,12],[594,687,12],[596,705,9],[629,697,25],[668,697,14],[205,658,13],[218,678,12],[249,660,24],[235,692,9],[212,702,9],[228,708,8]] },
  { x: 620, y: 190,
    o: [[177,120,12],[238,169,68],[180,237,24],[150,242,8],[327,213,30],[344,244,9],[372,261,24],[438,276,44],[369,294,7],[378,315,17],[417,342,25],[372,369,25],[446,430,68],[551,520,73],[576,606,17],[525,651,50],[453,686,30]],
    b: [[42,162,128],[148,304,52],[280,310,81],[5,322,13],[25,334,9],[46,342,12],[72,335,13],[65,361,13],[101,361,22],[174,440,86],[328,433,49],[280,505,40],[312,561,24],[372,521,50],[447,585,50],[354,620,50],[205,619,97],[417,645,17],[423,666,5],[395,689,28],[48,594,38],[88,646,24],[36,658,24],[66,675,11],[89,682,13],[103,696,4],[125,702,18],[42,698,22],[8,698,14]] },
  { x: 400, y: 425,
    o: [[82,65,67],[154,19,19],[184,34,15],[166,55,8],[165,75,12],[154,97,12],[152,118,5],[135,138,19],[150,160,5],[150,174,12],[163,188,7],[76,184,54],[78,278,39],[150,330,50],[216,369,17],[252,386,24],[186,396,24],[162,456,41],[232,481,33],[284,541,46],[348,516,24],[395,523,21],[360,558,20],[394,560,16],[455,550,46],[513,516,19],[533,493,9],[548,485,6],[537,537,14],[564,530,14],[592,540,14],[612,531,4],[560,558,14],[517,562,18],[590,573,17],[547,607,36],[486,614,26],[574,667,28],[639,668,39]],
    b: [[303,39,77],[193,5,15],[214,24,13],[215,49,13],[228,68,8],[192,66,17],[213,141,59],[430,132,81],[311,237,78],[175,212,22],[202,262,33],[236,321,33],[296,348,33],[337,325,13],[363,314,12],[363,341,17],[351,375,17],[380,367,13],[396,381,8],[379,391,9],[377,409,9],[411,398,11],[474,308,98],[315,440,59],[378,485,17],[440,455,52],[498,420,17],[520,403,9],[539,396,12],[528,456,29],[496,484,13],[591,384,44],[603,477,50],[637,265,70],[548,141,39],[607,172,27],[571,184,9],[498,54,24],[486,16,16],[522,0,24],[567,30,29],[528,37,11],[537,54,13],[526,73,9],[535,91,13],[558,74,17],[592,67,18],[579,99,13],[609,32,16],[625,55,14],[623,85,16],[606,114,14],[597,138,12],[616,133,7],[633,149,7],[641,120,24],[646,73,13],[662,91,9],[668,35,31]] },
  { x: 620, y: 425,
    o: [[441,26,17],[483,54,32],[519,18,19],[522,44,7],[531,62,12],[448,92,14],[451,112,10],[460,133,13],[528,129,53],[555,245,68],[555,339,24],[553,376,15],[577,427,40],[555,513,47],[501,519,8],[490,550,25],[459,555,8],[444,564,8],[423,585,19],[387,587,17],[355,586,16],[321,585,17],[291,573,14],[263,583,16],[218,553,40],[176,580,10],[162,594,8],[146,607,13],[104,630,35],[48,660,29]],
    b: [[87,15,24],[125,2,15],[63,60,26],[97,47,9],[95,65,6],[92,84,12],[142,47,34],[47,27,8],[66,117,33],[114,105,20],[25,80,14],[18,104,12],[19,130,15],[36,156,14],[21,186,20],[2,156,13],[0,91,9],[223,85,54],[318,20,59],[401,34,24],[396,-2,17],[431,64,18],[378,69,17],[347,101,25],[407,109,33],[300,171,59],[433,184,46],[147,222,101],[363,396,176],[73,406,99],[177,483,30],[126,545,50],[14,571,67]] }
];
let out = '';
for (const key of ['o', 'b']) for (const q of quads) for (const [x, y, r] of q[key])
  out += `<circle cx="${(q.x + x / 3 + 0.2).toFixed(2)}" cy="${(q.y + y / 3 + 0.2).toFixed(2)}" r="${(r / 3).toFixed(2)}" fill="${key === 'o' ? '#f28e2b' : '#4e79a7'}"/>`;
for (const [x, y, t] of [[634,240,'Has'],[634,256,'relevent'],[608,339,'Has'],[609,355,'relevent'],[741,545,'Has relevent'],[742,561,'experience'],[742,578,'Graduate']])
  out += `<text x="${x}" y="${y}" text-anchor="middle" fill="#e6ebf2">${t}</text>`;
document.getElementById('bubbles').innerHTML = out;
</script>
</body>
</html>
